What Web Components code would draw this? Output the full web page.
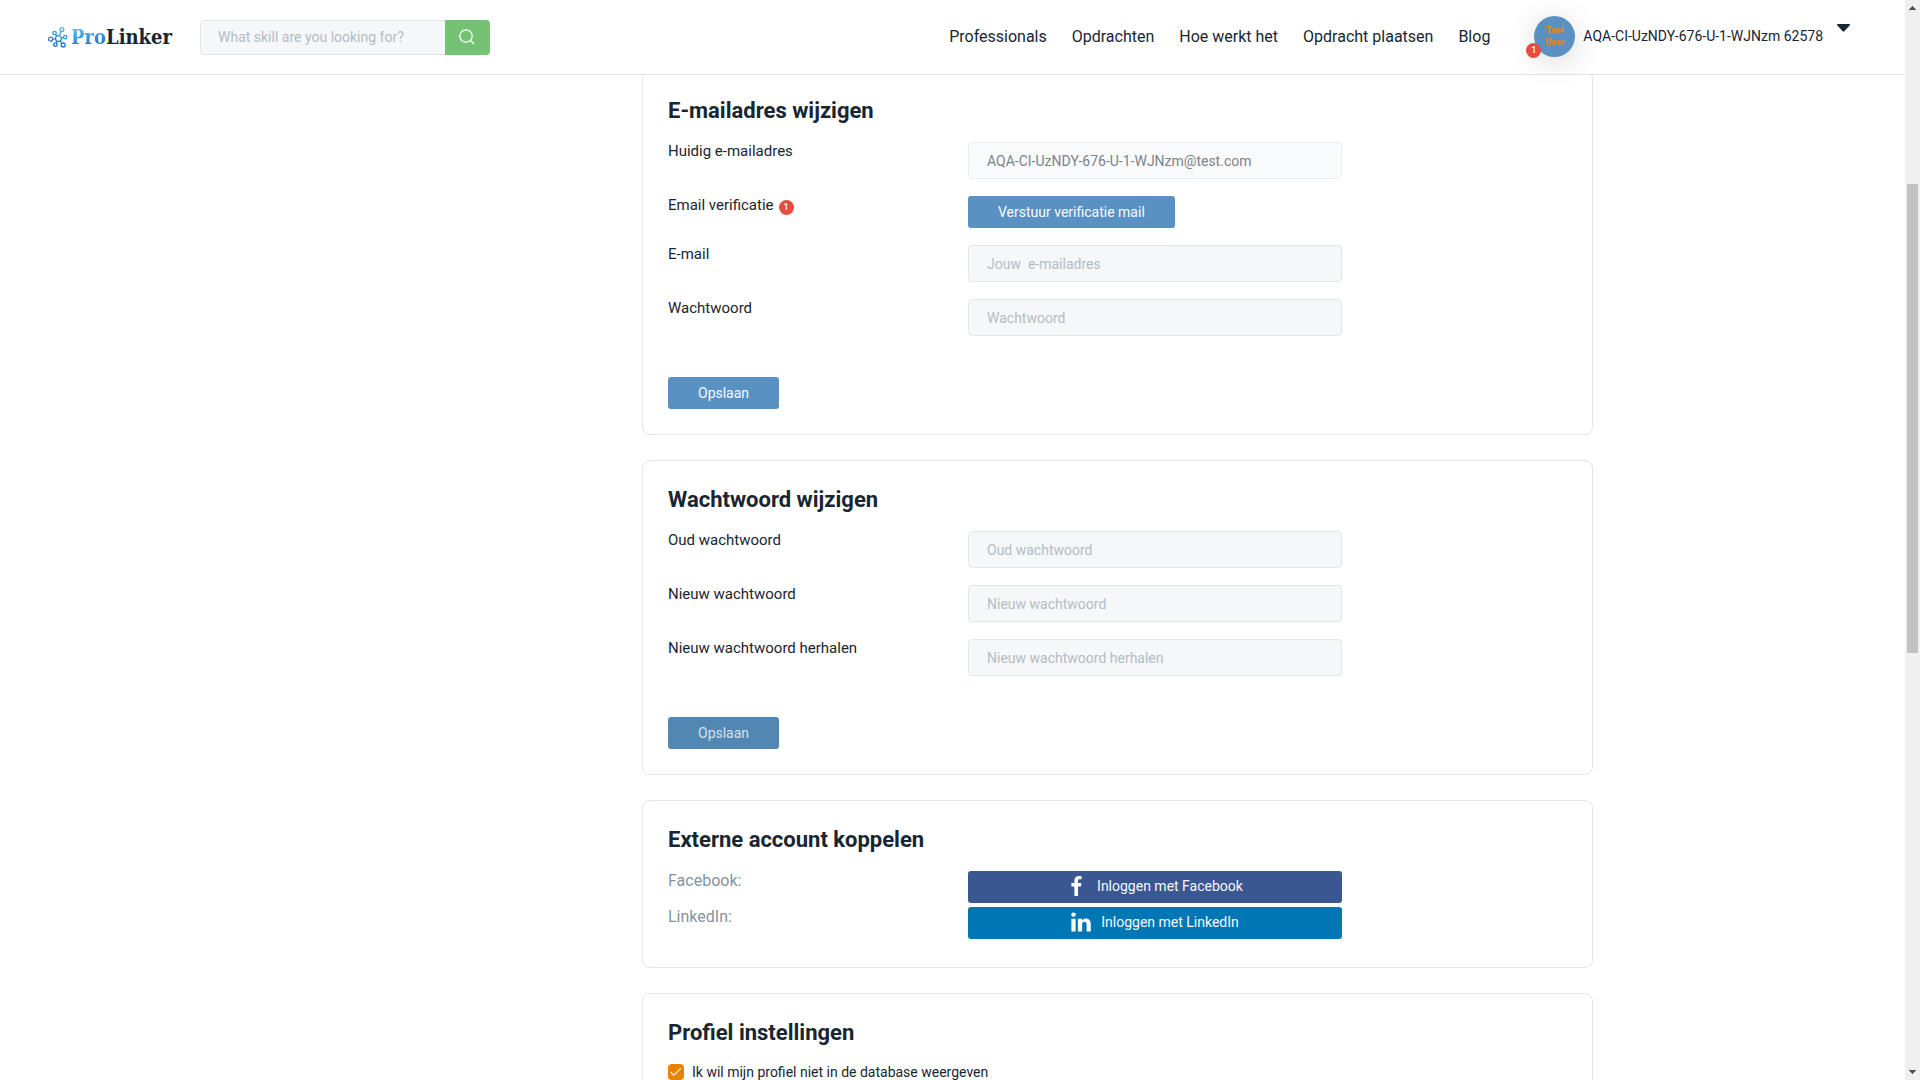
<!DOCTYPE html>
<html lang="nl">
<head>
<meta charset="utf-8">
<title>ProLinker – Instellingen</title>
<style>
  html, body { height: 100%; margin: 0; }
  body {
    font-family: Roboto, "Liberation Sans", sans-serif;
    color: #172b3a; background: #fff; overflow: hidden;
    --ink: #172631; --line: #e1e6eb; --field: #f5f7f9; --blue: #5a91c3;
  }
</style>
</head>
<body>
<app-shell>
  <site-header slot="header"></site-header>
  <settings-card heading="E-mailadres wijzigen">
    <form-row label="Huidig e-mailadres"><text-field type="email" name="Huidig e-mailadres" value="AQA-CI-UzNDY-676-U-1-WJNzm@test.com" disabled></text-field></form-row>
    <form-row label="Email verificatie" badge="1"><action-button>Verstuur verificatie mail</action-button></form-row>
    <form-row label="E-mail"><text-field type="email" name="E-mail" placeholder="Jouw  e-mailadres"></text-field></form-row>
    <form-row label="Wachtwoord"><text-field type="password" name="Wachtwoord" placeholder="Wachtwoord"></text-field></form-row>
    <action-button slot="footer">Opslaan</action-button>
  </settings-card>
  <settings-card heading="Wachtwoord wijzigen">
    <form-row label="Oud wachtwoord"><text-field type="password" name="Oud wachtwoord" placeholder="Oud wachtwoord"></text-field></form-row>
    <form-row label="Nieuw wachtwoord"><text-field type="password" name="Nieuw wachtwoord" placeholder="Nieuw wachtwoord"></text-field></form-row>
    <form-row label="Nieuw wachtwoord herhalen"><text-field type="password" name="Nieuw wachtwoord herhalen" placeholder="Nieuw wachtwoord herhalen"></text-field></form-row>
    <action-button slot="footer" tone="pressed">Opslaan</action-button>
  </settings-card>
  <settings-card heading="Externe account koppelen" compact>
    <form-row label="Facebook:" muted><social-button network="facebook">Inloggen met Facebook</social-button></form-row>
    <form-row label="LinkedIn:" muted><social-button network="linkedin">Inloggen met LinkedIn</social-button></form-row>
  </settings-card>
  <settings-card heading="Profiel instellingen">
    <check-option>Ik wil mijn profiel niet in de database weergeven</check-option>
  </settings-card>
</app-shell>

<script>
class BaseElement extends HTMLElement {
  connectedCallback() {
    if (this.shadowRoot) return;
    this.attachShadow({ mode: 'open' }).innerHTML =
      '<style>*{box-sizing:border-box}</style>' + this.render();
  }
  attr(name) { return this.getAttribute(name) || ''; }
}

customElements.define('app-shell', class extends BaseElement {
  render() { return `
    <style>
      :host { display: grid; grid-template-columns: minmax(0, 1fr) 15px; height: 100vh; }
      .page { position: relative; overflow: hidden; height: 100vh; }
      .top { position: absolute; inset: 0 0 auto; z-index: 2; }
      main { display: grid; grid-template-columns: 300px minmax(0, 1fr); column-gap: 30px;
        max-width: 1281px; margin: 0 auto; padding-top: 71px; }
      .cards { display: flex; flex-direction: column; gap: 25px; }
    </style>
    <div class="page">
      <div class="top"><slot name="header"></slot></div>
      <main><aside></aside><div class="cards"><slot></slot></div></main>
    </div>
    <scroll-rail></scroll-rail>`; }
});

customElements.define('scroll-rail', class extends BaseElement {
  render() { return `
    <style>
      :host { display: flex; flex-direction: column; background: #f0f0f0; height: 100vh; }
      svg { display: block; flex: none; }
      .track { flex: 1; display: flex; flex-direction: column; padding: 0 2px; }
      .before { flex: 167; } .thumb { flex: 469; background: #c1c1c1; } .after { flex: 410; }
    </style>
    <svg width="15" height="17" shape-rendering="crispEdges"><path d="M4 10h7L7.5 6z" fill="#505050"/></svg>
    <div class="track"><div class="before"></div><div class="thumb"></div><div class="after"></div></div>
    <svg width="15" height="17" shape-rendering="crispEdges"><path d="M4 7h7L7.5 11z" fill="#505050"/></svg>`; }
});

customElements.define('site-header', class extends BaseElement {
  render() { return `
    <style>
      :host { display: block; }
      header { display: flex; align-items: center; height: 75px; padding: 0 55px 0 48px;
        background: #fff; border-bottom: 1px solid #e2e5e8; }
      nav { display: flex; gap: 25px; margin-left: auto; font-size: 16px; line-height: 20px; }
      a { color: var(--ink); text-decoration: none; }
      brand-logo { flex: none; width: 152px; }
      user-menu { margin-left: 44px; }
    </style>
    <header>
      <brand-logo></brand-logo>
      <skill-search></skill-search>
      <nav><a href="#">Professionals</a><a href="#">Opdrachten</a><a href="#">Hoe werkt het</a><a href="#">Opdracht plaatsen</a><a href="#">Blog</a></nav>
      <user-menu></user-menu>
    </header>`; }
});

customElements.define('brand-logo', class extends BaseElement {
  render() { return `
    <style>
      :host { display: block; }
      a { display: flex; align-items: center; gap: 3px; text-decoration: none; color: #172631;
        font: bold 20px/24px "DejaVu Serif Condensed", "DejaVu Serif", serif; }
      svg { flex: none; }
      .pro { background: linear-gradient(170deg, #5cc0f8 15%, #1467bd 90%); -webkit-background-clip: text; background-clip: text; color: transparent; }
    </style>
    <a href="#">
      <svg width="20" height="21" viewBox="0 0 20 21" fill="none" stroke="url(#g)" stroke-width="1.3">
        <defs><linearGradient id="g" gradientUnits="userSpaceOnUse" x1="14" y1="0" x2="6" y2="20"><stop offset="0" stop-color="#52b8f2"/><stop offset="1" stop-color="#1467bd"/></linearGradient></defs>
        <circle cx="10.4" cy="11.6" r="2.9"/><circle cx="14" cy="2.6" r="1.9"/><circle cx="6.6" cy="6" r="1.7"/><circle cx="2.6" cy="12.2" r="2"/><circle cx="7.4" cy="17.6" r="1.8"/><circle cx="15.2" cy="18" r="2"/><circle cx="17.2" cy="10.2" r="1.7"/>
        <path d="M13.2 4.4l-2 4.4M7.6 7.4l1.2 1.8M4.6 12.1l2.9-.2M8.2 16l.9-1.8M14 16.3l-1.8-2.5M15.5 10.6l-2.3.5"/>
      </svg>
      <span><span class="pro">Pro</span>Linker</span>
    </a>`; }
});

customElements.define('skill-search', class extends BaseElement {
  render() { return `
    <style>
      :host { display: block; flex: none; }
      form { display: flex; height: 35px; margin: 0; }
      input { width: 245px; padding: 0 17px; border: 1px solid var(--line); border-right: 0;
        border-radius: 4px 0 0 4px; background: var(--field); font: 14px Roboto, sans-serif; color: var(--ink); outline: 0; }
      input::placeholder { color: #b4bcc3; opacity: 1; }
      button { width: 45px; padding: 0 2px 0 0; border: 0; border-radius: 0 4px 4px 0; background: #74c374; display: grid; place-items: center; }
    </style>
    <form>
      <input type="text" aria-label="Skill" placeholder="What skill are you looking for?">
      <button type="button" aria-label="Zoeken"><svg width="16" height="16" viewBox="0 0 16 16" fill="none" stroke="#fff" stroke-width="1.3"><circle cx="7" cy="7" r="6.2"/><path d="M11.4 11.4l3.6 3.6"/></svg></button>
    </form>`; }
});

customElements.define('count-badge', class extends BaseElement {
  render() { return `
    <style>
      :host { display: inline-flex; width: 15px; height: 15px; border-radius: 50%; background: #e84c3f;
        color: #fff; font-size: 9px; line-height: 14px; font-weight: 500; justify-content: center; }
    </style><slot></slot>`; }
});

customElements.define('user-menu', class extends BaseElement {
  render() { return `
    <style>
      :host { display: block; padding-bottom: 2px; }
      button { display: flex; align-items: center; gap: 8px; padding: 0; border: 0; background: none; color: var(--ink); font: 14px/20px Roboto, sans-serif; }
      .avatar { position: relative; display: grid; place-content: center; width: 41px; height: 41px; border-radius: 50%;
        background: #5a91c3; color: #e38712; font-size: 9px; font-weight: 900; line-height: 12px; text-align: center; box-shadow: 0 5px 30px rgba(0,0,0,.16); }
      count-badge { position: absolute; left: -8px; bottom: -1px; }
      .caret { margin: 0 0 16px 6px; }
    </style>
    <button type="button">
      <span class="avatar"><span>Test</span><span>User</span><count-badge>1</count-badge></span>
      <span>AQA-CI-UzNDY-676-U-1-WJNzm 62578</span>
      <svg class="caret" width="13" height="8" viewBox="0 0 13 8"><path d="M.8 0h11.4q1.2.3.4 1.4L7.3 7.3q-.8.8-1.6 0L.4 1.4Q-.4.3.8 0z" fill="#172631"/></svg>
    </button>`; }
});

customElements.define('settings-card', class extends BaseElement {
  render() { return `
    <style>
      :host { display: block; padding: 25px; border: 1px solid var(--line); border-radius: 8px; background: #fff; }
      h2 { margin: 0 0 17px; font-size: 22px; line-height: 28px; font-weight: 700; color: var(--ink); }
      .rows { display: flex; flex-direction: column; gap: 17px; }
      :host([compact]) .rows { gap: 4px; padding-bottom: 3px; }
      slot[name=footer]::slotted(*) { margin-top: 41px; }
    </style>
    <h2>${this.attr('heading')}</h2>
    <div class="rows"><slot></slot></div>
    <slot name="footer"></slot>`; }
});

customElements.define('form-row', class extends BaseElement {
  // A click on the visible label moves the focus to the slotted control.
  connectedCallback() {
    super.connectedCallback();
    this.shadowRoot.querySelector('label').addEventListener('click', () => {
      const control = this.firstElementChild;
      const input = control && control.shadowRoot && control.shadowRoot.querySelector('input');
      if (input) input.focus();
    });
  }
  render() {
    const badge = this.attr('badge');
    return `
    <style>
      :host { display: grid; grid-template-columns: 300px minmax(0, 374px); align-items: start; }
      label { display: flex; align-items: flex-end; gap: 5px; font-size: 15px; line-height: 18px; color: var(--ink); }
      :host([muted]) label { font-size: 16px; line-height: 20px; color: #8593a0; }
      count-badge { margin-bottom: -1px; }
    </style>
    <label>${this.attr('label')}${badge ? `<count-badge>${badge}</count-badge>` : ''}</label>
    <div><slot></slot></div>`; }
});

customElements.define('text-field', class extends BaseElement {
  render() { return `
    <style>
      :host { display: block; }
      input { display: block; width: 100%; height: 37px; padding: 0 18px; border: 1px solid var(--line); border-radius: 4px;
        background: var(--field); font: 14px Roboto, sans-serif; color: #444b50; outline: 0; }
      input::placeholder { color: #b4bcc3; opacity: 1; }
      input:disabled { background: #f9fafc; border-color: #eceff2; color: #7c8389; }
    </style>
    <input type="${this.attr('type')}" aria-label="${this.attr('name')}" placeholder="${this.attr('placeholder')}" value="${this.attr('value')}"${this.hasAttribute('disabled') ? ' disabled' : ''}>`; }
});

customElements.define('action-button', class extends BaseElement {
  render() { return `
    <style>
      :host { display: block; }
      button { display: block; height: 32px; padding: 0 30px; border: 0; border-radius: 3px; background: var(--blue);
        color: #f7fafc; font: 14px/30px Roboto, sans-serif; }
      :host([tone=pressed]) button { background: #5287b4; color: #d5e1eb; }
    </style>
    <button type="button"><slot></slot></button>`; }
});

customElements.define('social-button', class extends BaseElement {
  render() {
    const facebook = this.attr('network') === 'facebook';
    const icon = facebook
      ? '<svg width="11" height="20" viewBox="0 0 11 20"><path d="M10.5.2v3.1H8.6C7.2 3.3 7 4 7 4.9V7h3.4L10 10.4H7V20H3.4v-9.6H.4V7h3V4.5C3.4 1.6 5.2 0 7.8 0c1.3 0 2.4.1 2.7.2z" fill="#fff"/></svg>'
      : '<svg width="20" height="20" viewBox="0 0 20 20"><path d="M.4 6.7h4.2v12.8H.4zM2.5.4C3.9.4 4.8 1.3 4.8 2.6c0 1.2-.9 2.2-2.3 2.2C1.1 4.8.2 3.8.2 2.6.2 1.3 1.1.4 2.5.4zM6.9 6.7h4.2v1.8c.6-.9 1.6-2.1 3.8-2.1 2.8 0 4.9 1.8 4.9 5.8v7.3h-4.2v-6.9c0-1.7-.6-2.9-2.2-2.9-1.2 0-2.3 1-2.3 2.7v7.1H6.9z" fill="#fff"/></svg>';
    return `
    <style>
      :host { display: block; }
      button { display: flex; align-items: center; justify-content: center; gap: 15px; width: 100%; height: 32px; padding: 0 0 2px 4px;
        border: 0; border-radius: 3px; background: #3b5791; color: #f5f7fa; font: 14px/20px Roboto, sans-serif; }
      :host([network=linkedin]) button { background: #0077b5; gap: 10px; padding-left: 0; }
    </style>
    <button type="button">${icon}<span><slot></slot></span></button>`; }
});

customElements.define('check-option', class extends BaseElement {
  render() { return `
    <style>
      :host { display: block; }
      label { display: flex; align-items: center; gap: 8px; font-size: 14px; line-height: 16px; color: var(--ink); }
      .box { display: grid; flex: none; width: 16px; height: 16px; }
      input, svg { grid-area: 1 / 1; margin: 0; }
      input { appearance: none; width: 16px; height: 16px; border-radius: 4px; background: #e88300; }
      svg { pointer-events: none; }
    </style>
    <label><span class="box"><input type="checkbox" checked><svg width="16" height="16" fill="none" stroke="#fff" stroke-width="1.1"><path d="M2.5 8l3.3 3.3 7-7"/></svg></span><span><slot></slot></span></label>`; }
});
</script>
</body>
</html>
